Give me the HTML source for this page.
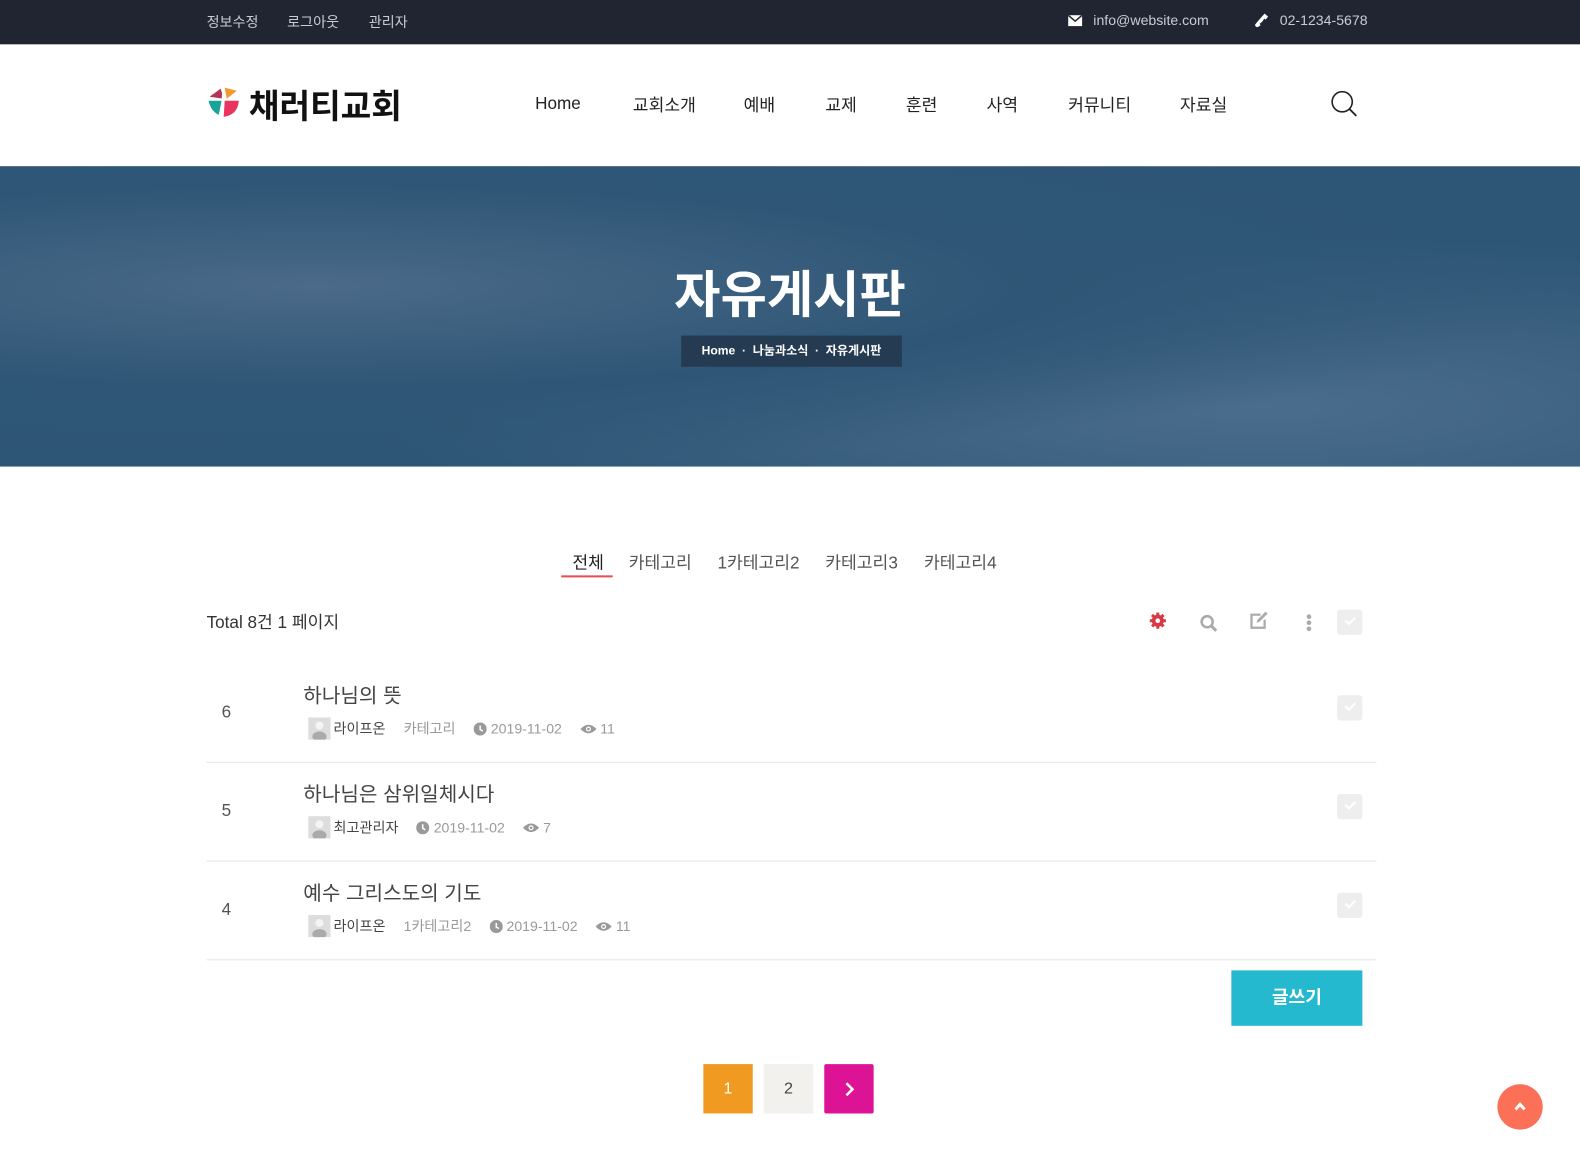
<!DOCTYPE html>
<html><head><meta charset="utf-8">
<style>
*{margin:0;padding:0;box-sizing:border-box}
html,body{width:1580px;height:1162px;overflow:hidden;background:#fff}
body{font-family:"Liberation Sans","Noto Sans CJK KR",sans-serif;color:#333;position:relative}
#w{position:absolute;left:0;top:0;width:1568px;height:1153px;transform:scale(1.00766);transform-origin:0 0}
.top{position:absolute;left:0;top:0;width:1568px;height:44px;background:#212532;color:#c9ccd3;font-size:14px}
.top span{position:absolute;top:12px}
.nav span{position:absolute;top:94px;font-size:17px;color:#222;line-height:22px;height:22px}
.banner{position:absolute;top:165px;left:0;width:1568px;height:298px;background:radial-gradient(ellipse at 20% 40%,#4a6a88 0,#2f5676 40%,transparent 70%),radial-gradient(ellipse at 80% 80%,#4b6d8d 0,transparent 50%),#2d5575}
.title{position:absolute;top:253px;left:0;width:1568px;text-align:center;color:#fff;font-size:50px;font-weight:bold}
.bc{position:absolute;left:676px;top:333px;width:219px;height:31px;background:#253b52;color:#fff;font-size:12px;font-weight:bold;text-align:center;line-height:31px}
.tabs span{position:absolute;top:544px;font-size:17px;color:#555}
.row{position:absolute;left:205px;width:1161px;height:98px;border-bottom:1px solid #e5e5e5}
.row .n{position:absolute;left:15px;top:38px;font-size:17px;color:#555}
.row .t{position:absolute;left:96px;top:15px;font-size:20px;color:#444}
.row .m{position:absolute;left:101px;top:53px;font-size:14px;color:#999;white-space:nowrap;display:flex;align-items:center;height:22px}
.av{display:inline-block;width:22px;height:22px;background:#ddd;margin-right:3px;position:relative;overflow:hidden}
.av:before{content:"";position:absolute;left:7px;top:4px;width:8px;height:8px;border-radius:50%;background:#f4f4f4}
.av:after{content:"";position:absolute;left:4px;top:14px;width:14px;height:10px;border-radius:50%;background:#aaa}
.chk{position:absolute;width:25px;height:25px;background:#eee;border-radius:3px}
.chk:after{content:"";position:absolute;left:8px;top:7px;width:8px;height:4px;border-left:2px solid #fff;border-bottom:2px solid #fff;transform:rotate(-45deg)}
.m b{font-weight:normal;color:#444}
.m svg{margin-right:4px}
.gap{display:inline-block;width:18px}
</style></head><body><div id="w">
<div class="top">
<span style="left:205px">정보수정</span><span style="left:285px">로그아웃</span><span style="left:366px">관리자</span>
<svg style="position:absolute;left:1060px;top:15px" width="14" height="11"><rect width="14" height="11" fill="#fff"/><path d="M0 0L7 6L14 0" stroke="#212532" stroke-width="1.5" fill="none"/></svg>
<span style="left:1085px">info@website.com</span>
<svg style="position:absolute;left:1245px;top:13px" width="14" height="14"><path d="M10 0.5L13.5 3.5L11 6.5L9.5 5.5Q8 9 5 10.5L6 12L3 14Q0.5 13.5 0.5 11.5Q4 7 10 0.5Z" fill="#fff"/></svg>
<span style="left:1270px">02-1234-5678</span>
</div>
<svg style="position:absolute;left:205px;top:84px" width="36" height="40"><path d="M3 12L14 4L17 14Z" fill="#b4345a"/><path d="M18 3L30 6L20 14Z" fill="#f29a2e"/><path d="M2 16L15 16L12 30Q4 26 2 16Z" fill="#1aa39a"/><path d="M18 16L32 16Q31 30 17 32Z" fill="#e8345f"/><path d="M17 2L14 38" stroke="#fff" stroke-width="2"/></svg>
<div style="position:absolute;left:247px;top:79px;font-size:33px;font-weight:bold;color:#111">채러티교회</div>
<div class="nav"><span style="left:531px;top:92px">Home</span><span style="left:628px">교회소개</span><span style="left:738px">예배</span><span style="left:819px">교제</span><span style="left:899px">훈련</span><span style="left:979px">사역</span><span style="left:1060px">커뮤니티</span><span style="left:1171px">자료실</span></div>
<svg style="position:absolute;left:1320px;top:89px" width="28" height="28"><circle cx="12" cy="12" r="10" stroke="#222" stroke-width="1.6" fill="none"/><path d="M19 19L26 26" stroke="#222" stroke-width="1.8"/></svg>
<div class="banner"></div>
<div class="title">자유게시판</div>
<div class="bc">Home &nbsp;·&nbsp; 나눔과소식 &nbsp;·&nbsp; 자유게시판</div>
<div class="tabs"><span style="left:568px;color:#222">전체</span><span style="left:624px">카테고리</span><span style="left:712px">1카테고리2</span><span style="left:819px">카테고리3</span><span style="left:917px">카테고리4</span></div>
<div style="position:absolute;left:557px;top:571px;width:51px;height:2px;background:#e84c4c"></div>
<div style="position:absolute;left:205px;top:603px;font-size:17px;color:#333">Total 8건 1 페이지</div>
<svg style="position:absolute;left:1140px;top:607px" width="18" height="18"><circle cx="9" cy="9" r="6" fill="#d63a45"/><path d="M9 1V17M1 9H17M3.3 3.3L14.7 14.7M14.7 3.3L3.3 14.7" stroke="#d63a45" stroke-width="3"/><circle cx="9" cy="9" r="2.3" fill="#fff"/></svg>
<svg style="position:absolute;left:1190px;top:609px" width="20" height="20"><circle cx="8" cy="8" r="5.5" stroke="#aaa" stroke-width="2.5" fill="none"/><path d="M12 12L17 17" stroke="#aaa" stroke-width="3"/></svg>
<svg style="position:absolute;left:1239px;top:606px" width="22" height="20"><path d="M12 4H3V17H16V9" stroke="#aaa" stroke-width="2.2" fill="none"/><path d="M8 12L9 9L17 1L19 3L11 11Z" fill="#aaa"/></svg>
<svg style="position:absolute;left:1295px;top:609px" width="8" height="18"><circle cx="4" cy="3" r="2.3" fill="#aaa"/><circle cx="4" cy="9" r="2.3" fill="#aaa"/><circle cx="4" cy="15" r="2.3" fill="#aaa"/></svg>
<div class="chk" style="left:1327px;top:605px"></div>

<div class="row" style="top:659px"><div class="n">6</div><div class="t">하나님의 뜻</div><div class="m"><span class="av"></span><b>라이프온</b><span class="gap"></span>카테고리<span class="gap"></span><svg width="13" height="13"><circle cx="6.5" cy="6.5" r="6.5" fill="#999"/><path d="M6.5 3V7L9 8.5" stroke="#fff" stroke-width="1.5" fill="none"/></svg>2019-11-02<span class="gap"></span><svg width="16" height="11"><path d="M0 5.5Q8 -3 16 5.5Q8 14 0 5.5Z" fill="#999"/><circle cx="8" cy="5.5" r="2.5" fill="#fff"/><circle cx="8" cy="5.5" r="1.3" fill="#999"/></svg>11</div><div class="chk" style="left:1122px;top:31px"></div></div>
<div class="row" style="top:757px"><div class="n">5</div><div class="t">하나님은 삼위일체시다</div><div class="m"><span class="av"></span><b>최고관리자</b><span class="gap"></span><svg width="13" height="13"><circle cx="6.5" cy="6.5" r="6.5" fill="#999"/><path d="M6.5 3V7L9 8.5" stroke="#fff" stroke-width="1.5" fill="none"/></svg>2019-11-02<span class="gap"></span><svg width="16" height="11"><path d="M0 5.5Q8 -3 16 5.5Q8 14 0 5.5Z" fill="#999"/><circle cx="8" cy="5.5" r="2.5" fill="#fff"/><circle cx="8" cy="5.5" r="1.3" fill="#999"/></svg>7</div><div class="chk" style="left:1122px;top:31px"></div></div>
<div class="row" style="top:855px"><div class="n">4</div><div class="t">예수 그리스도의 기도</div><div class="m"><span class="av"></span><b>라이프온</b><span class="gap"></span>1카테고리2<span class="gap"></span><svg width="13" height="13"><circle cx="6.5" cy="6.5" r="6.5" fill="#999"/><path d="M6.5 3V7L9 8.5" stroke="#fff" stroke-width="1.5" fill="none"/></svg>2019-11-02<span class="gap"></span><svg width="16" height="11"><path d="M0 5.5Q8 -3 16 5.5Q8 14 0 5.5Z" fill="#999"/><circle cx="8" cy="5.5" r="2.5" fill="#fff"/><circle cx="8" cy="5.5" r="1.3" fill="#999"/></svg>11</div><div class="chk" style="left:1122px;top:31px"></div></div>

<div style="position:absolute;left:1222px;top:963px;width:130px;height:55px;background:#25b9cf;color:#fff;font-size:18px;font-weight:bold;text-align:center;line-height:55px">글쓰기</div>
<div style="position:absolute;left:698px;top:1056px;width:49px;height:49px;background:#f09a22;color:#fff;font-size:16px;text-align:center;line-height:49px">1</div>
<div style="position:absolute;left:758px;top:1056px;width:49px;height:49px;background:#f2f1ee;color:#444;font-size:16px;text-align:center;line-height:49px">2</div>
<div style="position:absolute;left:818px;top:1056px;width:49px;height:49px;background:#db1394;border-radius:2px"><svg style="position:absolute;left:19px;top:17px" width="12" height="16"><path d="M3 2L9 8L3 14" stroke="#fff" stroke-width="2.5" fill="none"/></svg></div>
<div style="position:absolute;left:1486px;top:1076px;width:45px;height:45px;border-radius:50%;background:#fc7058"><svg style="position:absolute;left:16px;top:16px" width="13" height="12"><path d="M2 9L6.5 4L11 9" stroke="#fff" stroke-width="3" fill="none"/></svg></div>
</div></body></html>
